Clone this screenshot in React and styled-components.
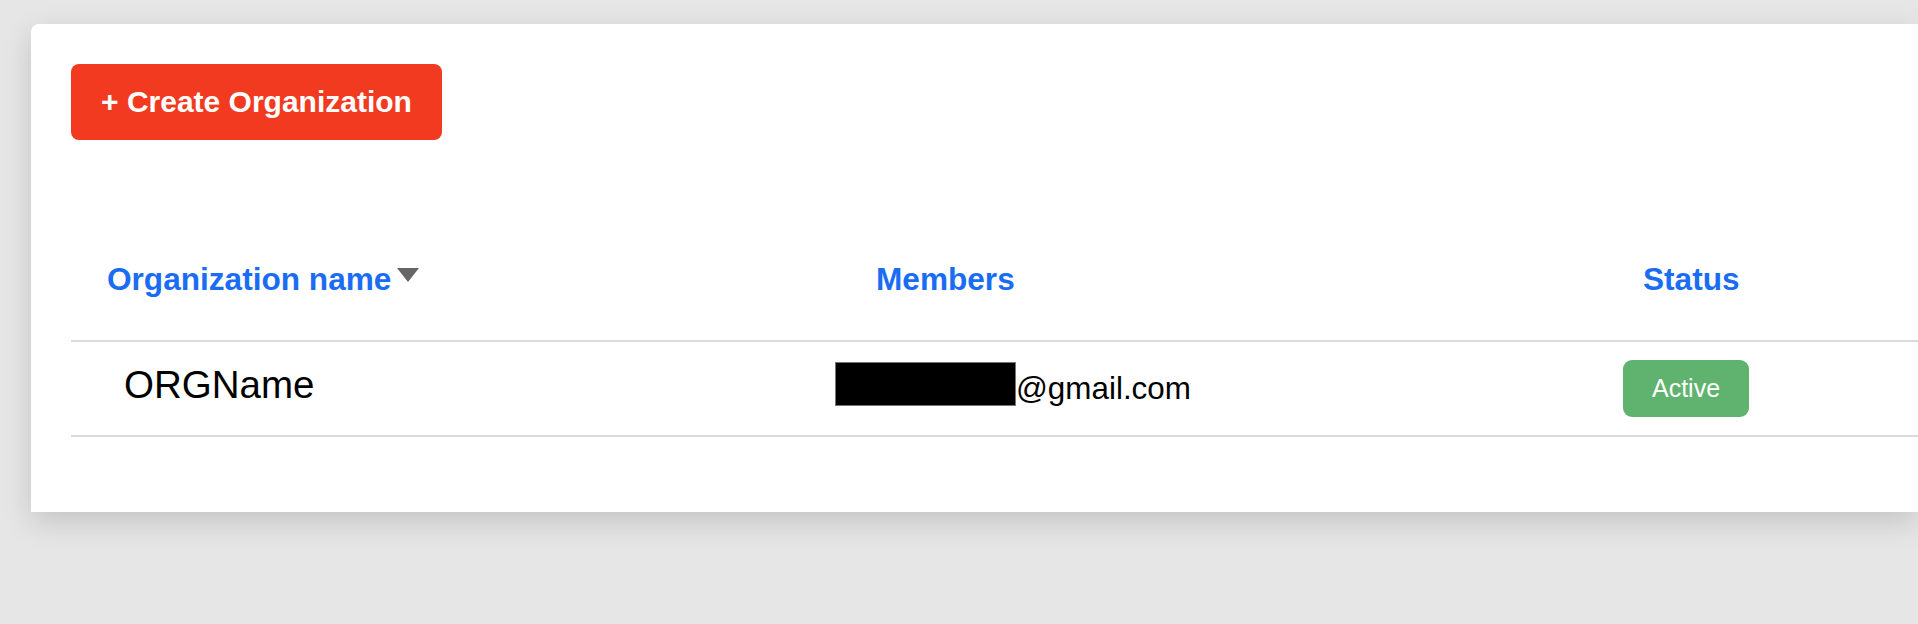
import React from "react";
import styled, { createGlobalStyle } from "styled-components";

const Global = createGlobalStyle`
  html, body {
    margin: 0;
    padding: 0;
    background: #e6e6e6;
    overflow: hidden;
    font-family: "Liberation Sans", Arial, Helvetica, sans-serif;
  }
`;

const Page = styled.div`
  width: 1918px;
  height: 624px;
  padding: 24px 0 0 31px;
  box-sizing: border-box;
`;

const Card = styled.div`
  width: 100%;
  height: 488px;
  box-sizing: border-box;
  background: #ffffff;
  border-radius: 8px 0 0 0;
  box-shadow: 0 10px 30px rgba(0, 0, 0, 0.15);
  padding: 40px 0 40px 40px;
`;

const CreateButton = styled.button`
  width: 371px;
  height: 76px;
  border: none;
  border-radius: 8px;
  background: #f23a21;
  color: #ffffff;
  font-family: "Liberation Sans", Arial, Helvetica, sans-serif;
  font-weight: 700;
  font-size: 30px;
  display: flex;
  align-items: center;
  justify-content: center;
  padding: 0;
  cursor: pointer;
`;

const Table = styled.div`
  margin-top: 80px;
  display: grid;
  grid-template-columns: 729px 760px 1fr;
`;

const HeadCell = styled.div`
  padding: 41px 0 43px ${(p) => p.$left}px;
  border-bottom: 2px solid #dadbde;
  color: #1a6df3;
  font-weight: 700;
  font-size: 31.6px;
  line-height: 36px;
  display: flex;
  align-items: flex-start;
`;

const SortArrow = styled.svg`
  width: 22px;
  height: 14px;
  margin-left: 6px;
  margin-top: 7px;
`;

const BodyCell = styled.div`
  min-height: 95px;
  box-sizing: border-box;
  border-bottom: 2px solid #dadbde;
  padding-left: ${(p) => p.$left}px;
  padding-bottom: ${(p) => p.$lift || 0}px;
  display: flex;
  align-items: center;
  color: #000000;
  font-size: ${(p) => p.$size || 31.4}px;
`;

const Redacted = styled.span`
  display: inline-block;
  width: 181px;
  height: 44px;
  box-sizing: border-box;
  background: #000000;
  border: 1px solid #777777;
  margin-bottom: 9px;
`;

const Badge = styled.span`
  display: inline-flex;
  align-items: center;
  justify-content: center;
  width: 126px;
  height: 57px;
  border-radius: 9px;
  background: #5fb36e;
  color: #ffffff;
  font-size: 25px;
`;

export default function App() {
  return (
    <>
      <Global />
      <Page>
        <Card>
          <CreateButton>+ Create Organization</CreateButton>
          <Table>
            <HeadCell $left={36}>
              Organization name
              <SortArrow viewBox="0 0 22 14">
                <polygon points="0,0 22,0 11,14" fill="#666666" />
              </SortArrow>
            </HeadCell>
            <HeadCell $left={76}>Members</HeadCell>
            <HeadCell $left={83}>Status</HeadCell>

            <BodyCell $left={53} $size={38.5} $lift={7}>
              ORGName
            </BodyCell>
            <BodyCell $left={35}>
              <Redacted />
              @gmail.com
            </BodyCell>
            <BodyCell $left={63}>
              <Badge>Active</Badge>
            </BodyCell>
          </Table>
        </Card>
      </Page>
    </>
  );
}
